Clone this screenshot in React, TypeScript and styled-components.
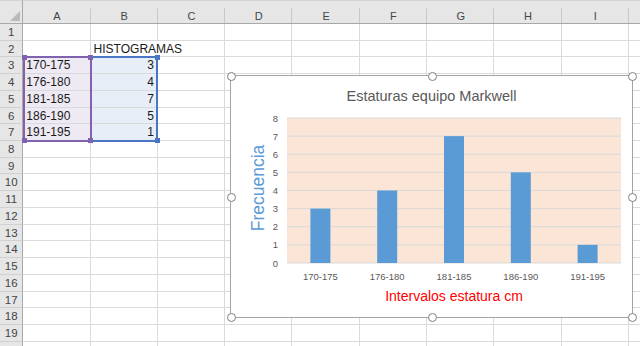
import React from 'react';
import styled, { createGlobalStyle } from 'styled-components';

const GlobalStyle = createGlobalStyle`
  html, body {
    margin: 0;
    padding: 0;
    background: #ffffff;
    overflow: hidden;
  }
  body {
    font-family: "Liberation Sans", Arial, sans-serif;
  }
`;

// J sits past the right edge, so its letter is never seen
const COLS = ['A', 'B', 'C', 'D', 'E', 'F', 'G', 'H', 'I', ''];
const ROW_COUNT = 20;
const LABELLED_ROWS = 19;

const data = [
  { label: '170-175', value: 3 },
  { label: '176-180', value: 4 },
  { label: '181-185', value: 7 },
  { label: '186-190', value: 5 },
  { label: '191-195', value: 1 },
];

const Sheet = styled.div`
  position: relative;
  width: 640px;
  height: 346px;
  overflow: hidden;
  display: grid;
  grid-template-columns: 23.3px repeat(10, 67.3px);
  grid-template-rows: 24px repeat(${ROW_COUNT}, 16.73px);
`;

const Corner = styled.div`
  position: relative;
  background: #e6e6e6;
  border-top: 1px solid #d2d2d2;
  border-right: 1px solid #a8a8a8;
  border-bottom: 1px solid #a8a8a8;
  box-sizing: border-box;

  &::after {
    content: '';
    position: absolute;
    right: 2px;
    bottom: 2px;
    width: 0;
    height: 0;
    border-left: 10px solid transparent;
    border-bottom: 10px solid #b9b9b9;
  }
`;

const ColHead = styled.div`
  position: relative;
  background: #e6e6e6;
  border-top: 1px solid #d2d2d2;
  border-bottom: 1px solid #a8a8a8;
  box-sizing: border-box;
  padding-top: 7px;
  line-height: 16px;
  font-size: 11px;
  color: #444444;
  text-align: center;

  &::after {
    content: '';
    position: absolute;
    right: 0;
    top: 7px;
    bottom: 0;
    width: 1px;
    background: #c8c8c8;
  }
`;

const RowHead = styled.div`
  background: #e6e6e6;
  border-right: 1px solid #a8a8a8;
  border-bottom: 1px solid #d0d0d0;
  box-sizing: border-box;
  font-size: 11.5px;
  line-height: 16px;
  color: #444444;
  text-align: center;
`;

const Cell = styled.div<{ $align?: 'left' | 'right'; $fill?: string; $open?: boolean }>`
  border-right: 1px solid ${(p) => (p.$open ? 'transparent' : '#dadada')};
  border-bottom: 1px solid #dadada;
  box-sizing: border-box;
  background: ${(p) => p.$fill || 'transparent'};
  padding: 0 3px;
  font-size: 12px;
  line-height: 16px;
  color: #1a1a1a;
  text-align: ${(p) => p.$align || 'left'};
  white-space: nowrap;
  overflow: visible;
  position: relative;
  z-index: 1;
`;

const Range = styled.div<{ $color: string; $left: number; $top: number; $w: number; $h: number }>`
  position: absolute;
  left: ${(p) => p.$left}px;
  top: ${(p) => p.$top}px;
  width: ${(p) => p.$w}px;
  height: ${(p) => p.$h}px;
  border: 2px solid ${(p) => p.$color};
  box-sizing: border-box;
  z-index: 2;
`;

const RangeDot = styled.span<{ $color: string; $x: 'l' | 'r'; $y: 't' | 'b' }>`
  position: absolute;
  width: 5px;
  height: 5px;
  background: ${(p) => p.$color};
  ${(p) => (p.$x === 'l' ? 'left: -3.5px;' : 'right: -3.5px;')}
  ${(p) => (p.$y === 't' ? 'top: -3.5px;' : 'bottom: -3.5px;')}
`;

const ChartFrame = styled.div`
  position: absolute;
  left: 230px;
  top: 75px;
  width: 403px;
  height: 243px;
  box-sizing: border-box;
  border: 1px solid #a3a3a3;
  background: #ffffff;
  display: flex;
  flex-direction: column;
  z-index: 3;
`;

const ChartTitle = styled.div`
  padding-top: 12px;
  line-height: 16px;
  font-size: 14.5px;
  color: #595959;
  text-align: center;
`;

const AxisTitle = styled.div`
  padding-left: 45px;
  line-height: 16px;
  font-size: 14px;
  color: #ff0000;
  text-align: center;
`;

const Knob = styled.span<{ $x: number; $y: number }>`
  position: absolute;
  left: ${(p) => p.$x}%;
  top: ${(p) => p.$y}%;
  width: 7px;
  height: 7px;
  margin: -4px 0 0 -4px;
  border: 1px solid #7f7f7f;
  border-radius: 50%;
  background: #ffffff;
`;

const PLOT_X = 56;
const PLOT_W = 334;
const PLOT_TOP = 14;
const PLOT_H = 145;
const MAX = 8;
const UNIT = PLOT_H / MAX;
const CAT = PLOT_W / data.length;
const BAR_W = 20;

const Histogram: React.FC = () => (
  <svg width={401} height={184} style={{ display: 'block' }}>
    <rect x={PLOT_X} y={PLOT_TOP} width={PLOT_W} height={PLOT_H} fill="#fbe5d6" />
    {Array.from({ length: MAX + 1 }, (_, i) => {
      const y = PLOT_TOP + PLOT_H - i * UNIT;
      return (
        <g key={i}>
          <line x1={PLOT_X} x2={PLOT_X + PLOT_W} y1={y} y2={y} stroke="#d9d9d9" strokeWidth={1} />
          <text
            x={47}
            y={y}
            fontSize={9.5}
            fill="#595959"
            textAnchor="end"
            dominantBaseline="central"
            fontFamily="Liberation Sans, Arial, sans-serif"
          >
            {i}
          </text>
        </g>
      );
    })}
    {data.map((d, i) => {
      const cx = PLOT_X + CAT * i + CAT / 2;
      const h = d.value * UNIT;
      return (
        <g key={d.label}>
          <rect x={cx - BAR_W / 2} y={PLOT_TOP + PLOT_H - h} width={BAR_W} height={h} fill="#5b9bd5" />
          <text
            x={cx}
            y={172}
            fontSize={9.5}
            fill="#595959"
            textAnchor="middle"
            dominantBaseline="central"
            fontFamily="Liberation Sans, Arial, sans-serif"
          >
            {d.label}
          </text>
        </g>
      );
    })}
    <text
      x={27}
      y={84}
      fontSize={17.5}
      fill="#5b9bd5"
      textAnchor="middle"
      dominantBaseline="central"
      transform="rotate(-90 27 84)"
      fontFamily="Liberation Sans, Arial, sans-serif"
    >
      Frecuencia
    </text>
  </svg>
);

const knobs = [
  [0, 0], [50, 0], [100, 0],
  [0, 50], [100, 50],
  [0, 100], [50, 100], [100, 100],
];

const App: React.FC = () => {
  const cellFor = (row: number, col: number) => {
    const item = row >= 3 && row <= 7 ? data[row - 3] : null;
    if (col === 0) {
      return item ? <Cell key={col} $fill="#eeeaf4">{item.label}</Cell> : <Cell key={col} />;
    }
    if (col === 1) {
      if (row === 2) return <Cell key={col} $open>HISTOGRAMAS</Cell>;
      return item ? (
        <Cell key={col} $fill="#e8eef8" $align="right">{item.value}</Cell>
      ) : (
        <Cell key={col} />
      );
    }
    return <Cell key={col} />;
  };

  return (
    <>
      <GlobalStyle />
      <Sheet>
        <Corner />
        {COLS.map((c, i) => (
          <ColHead key={i}>{c}</ColHead>
        ))}
        {Array.from({ length: ROW_COUNT }, (_, r) => (
          <React.Fragment key={r}>
            <RowHead>{r < LABELLED_ROWS ? r + 1 : ''}</RowHead>
            {COLS.map((_, c) => cellFor(r + 1, c))}
          </React.Fragment>
        ))}

        <Range $color="#4a76c6" $left={89.7} $top={56.3} $w={68.6} $h={85.7}>
          <RangeDot $color="#4a76c6" $x="r" $y="t" />
          <RangeDot $color="#4a76c6" $x="r" $y="b" />
        </Range>
        <Range $color="#8062b0" $left={23.3} $top={56.3} $w={68.4} $h={85.7}>
          <RangeDot $color="#8062b0" $x="l" $y="t" />
          <RangeDot $color="#8062b0" $x="r" $y="t" />
          <RangeDot $color="#8062b0" $x="l" $y="b" />
          <RangeDot $color="#8062b0" $x="r" $y="b" />
        </Range>

        <ChartFrame>
          <ChartTitle>Estaturas equipo Markwell</ChartTitle>
          <Histogram />
          <AxisTitle>Intervalos estatura cm</AxisTitle>
          {knobs.map(([x, y]) => (
            <Knob key={`${x}-${y}`} $x={x} $y={y} />
          ))}
        </ChartFrame>
      </Sheet>
    </>
  );
};

export default App;
